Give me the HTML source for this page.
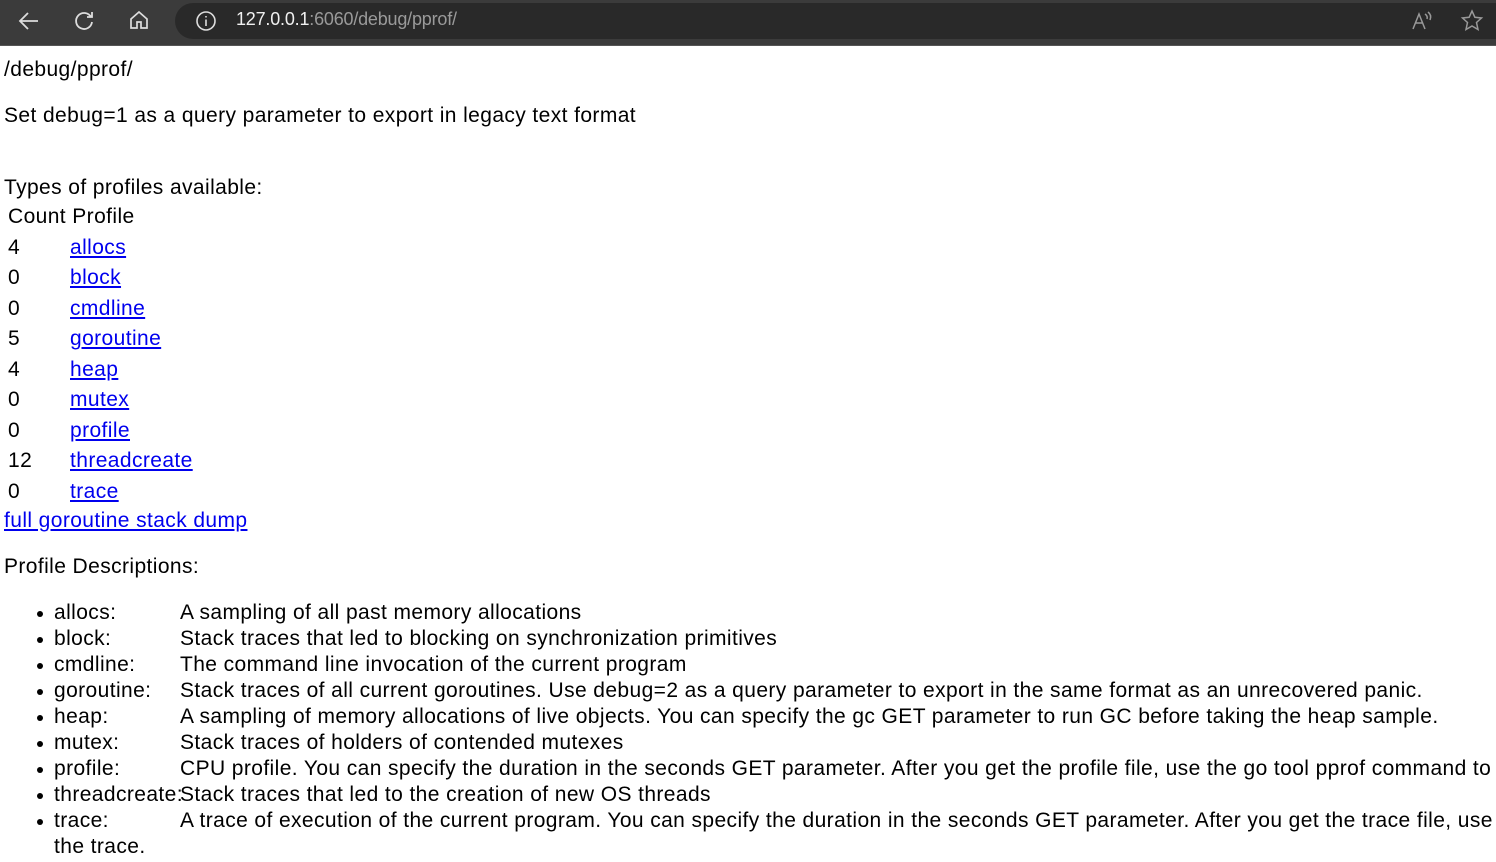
<!DOCTYPE html>
<html><head><style>
html,body{overflow:hidden}
body{margin:0;width:1496px;height:862px;background:#fff;font-family:"Liberation Sans",sans-serif;font-size:21px;letter-spacing:0.4px;color:#000;position:relative}
.bar{position:absolute;left:0;top:0;width:1496px;height:45px;background:#3b3b3b;border-bottom:1px solid #555}
.pill{position:absolute;left:175px;top:3px;right:0;height:36px;background:#292929;border-radius:18px 0 0 18px}
.url{position:absolute;left:236px;top:9px;font-size:18px;color:#9a9a9a;letter-spacing:-0.2px}
.url b{font-weight:normal;color:#f0f0f0}
.t{position:absolute;white-space:nowrap;line-height:24px}
.clip{right:0;overflow:hidden}
a{color:#0000ee;text-decoration:underline}
.li::before{content:"";position:absolute;left:-17px;top:10px;width:6px;height:6px;border-radius:50%;background:#000}
</style></head><body>
<div class="bar">
<svg style="position:absolute;left:16px;top:9px" width="26" height="24" viewBox="0 0 26 24" fill="none" stroke="#ddd" stroke-width="1.8"><path d="M22 12H4M12 4L4 12L12 20"/></svg>
<svg style="position:absolute;left:72px;top:9px" width="24" height="24" viewBox="0 0 24 24" fill="none" stroke="#ddd" stroke-width="1.8"><path d="M19 8A8 8 0 1 0 20 13M20 3V8H15"/></svg>
<svg style="position:absolute;left:128px;top:9px" width="22" height="22" viewBox="0 0 22 22" fill="none" stroke="#ddd" stroke-width="1.7"><path d="M3 10L11 3L19 10V19H13V13H9V19H3Z"/></svg>
<div class="pill"></div>
<svg style="position:absolute;left:195px;top:10px" width="22" height="22" viewBox="0 0 22 22" fill="none" stroke="#ddd" stroke-width="1.6"><circle cx="11" cy="11" r="9"/><path d="M11 9.5V16M11 6V7.5"/></svg>
<div class="url"><b>127.0.0.1</b>:6060/debug/pprof/</div>
<svg style="position:absolute;left:1411px;top:10px" width="24" height="22" viewBox="0 0 24 22" fill="none" stroke="#999" stroke-width="1.5"><path d="M2 19L8 4L14 19M4.5 13H11.5M14 4Q17 6 16 9M17 2Q21 5 19 10"/></svg>
<svg style="position:absolute;left:1460px;top:9px" width="24" height="24" viewBox="0 0 24 24" fill="none" stroke="#999" stroke-width="1.5"><path d="M12 2L14.9 8.3L21.5 9L16.5 13.5L18 20.5L12 17L6 20.5L7.5 13.5L2.5 9L9.1 8.3Z"/></svg>
</div>
<div class="t" style="left:4px;top:58px">/debug/pprof/</div>
<div class="t" style="left:4px;top:104px">Set debug=1 as a query parameter to export in legacy text format</div>
<div class="t" style="left:4px;top:176px">Types of profiles available:</div>
<div class="t" style="left:8px;top:205px">Count Profile</div>
<div class="t" style="left:8px;top:236px">4</div><div class="t" style="left:70px;top:236px"><a>allocs</a></div>
<div class="t" style="left:8px;top:266px">0</div><div class="t" style="left:70px;top:266px"><a>block</a></div>
<div class="t" style="left:8px;top:297px">0</div><div class="t" style="left:70px;top:297px"><a>cmdline</a></div>
<div class="t" style="left:8px;top:327px">5</div><div class="t" style="left:70px;top:327px"><a>goroutine</a></div>
<div class="t" style="left:8px;top:358px">4</div><div class="t" style="left:70px;top:358px"><a>heap</a></div>
<div class="t" style="left:8px;top:388px">0</div><div class="t" style="left:70px;top:388px"><a>mutex</a></div>
<div class="t" style="left:8px;top:419px">0</div><div class="t" style="left:70px;top:419px"><a>profile</a></div>
<div class="t" style="left:8px;top:449px">12</div><div class="t" style="left:70px;top:449px"><a>threadcreate</a></div>
<div class="t" style="left:8px;top:480px">0</div><div class="t" style="left:70px;top:480px"><a>trace</a></div>
<div class="t" style="left:4px;top:509px"><a>full goroutine stack dump</a></div>
<div class="t" style="left:4px;top:555px">Profile Descriptions:</div>
<div class="t li" style="left:54px;top:601px">allocs:</div><div class="t" style="left:180px;top:601px">A sampling of all past memory allocations</div>
<div class="t li" style="left:54px;top:627px">block:</div><div class="t" style="left:180px;top:627px">Stack traces that led to blocking on synchronization primitives</div>
<div class="t li" style="left:54px;top:653px">cmdline:</div><div class="t" style="left:180px;top:653px">The command line invocation of the current program</div>
<div class="t li" style="left:54px;top:679px">goroutine:</div><div class="t" style="left:180px;top:679px">Stack traces of all current goroutines. Use debug=2 as a query parameter to export in the same format as an unrecovered panic.</div>
<div class="t li" style="left:54px;top:705px">heap:</div><div class="t" style="left:180px;top:705px">A sampling of memory allocations of live objects. You can specify the gc GET parameter to run GC before taking the heap sample.</div>
<div class="t li" style="left:54px;top:731px">mutex:</div><div class="t" style="left:180px;top:731px">Stack traces of holders of contended mutexes</div>
<div class="t li" style="left:54px;top:757px">profile:</div><div class="t clip" style="left:180px;top:757px">CPU profile. You can specify the duration in the seconds GET parameter. After you get the profile file, use the go tool pprof command to investigate the profile.</div>
<div class="t li" style="left:54px;top:783px">threadcreate:</div><div class="t" style="left:180px;top:783px">Stack traces that led to the creation of new OS threads</div>
<div class="t li" style="left:54px;top:809px">trace:</div><div class="t clip" style="left:180px;top:809px">A trace of execution of the current program. You can specify the duration in the seconds GET parameter. After you get the trace file, use the go tool trace command to investigate</div>
<div class="t" style="left:54px;top:835px">the trace.</div>
</body></html>
